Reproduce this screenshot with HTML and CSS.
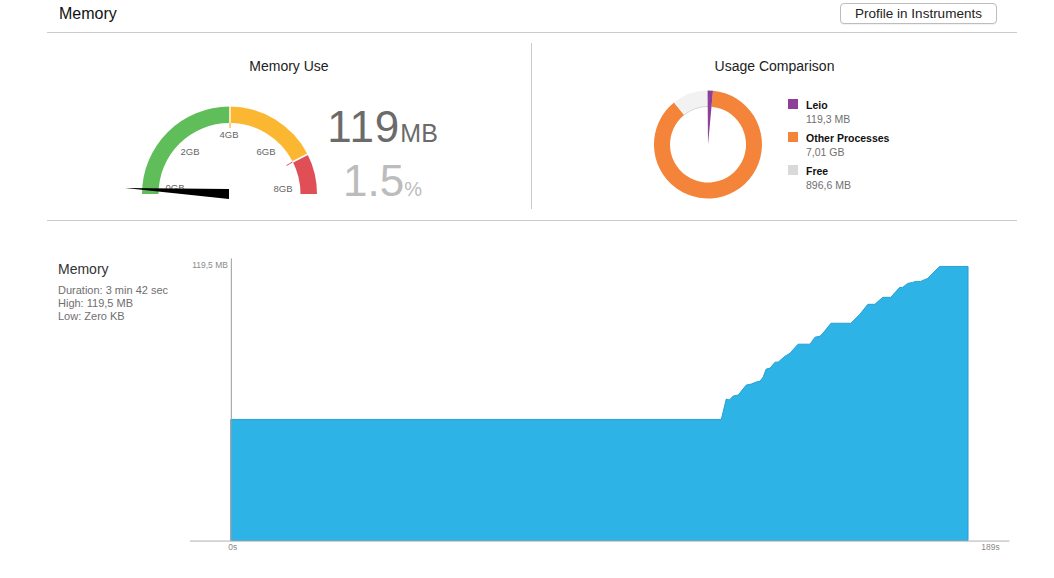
FILE: index.html
```html
<!DOCTYPE html>
<html lang="en">
<head>
  <meta charset="UTF-8" />
  <title>Memory</title>
  <link rel="stylesheet" href="styles.css">
</head>
<body>
  <div class="report">

    <!-- header -->
    <header class="report-head">
      <h1>Memory</h1>
      <button class="btn">Profile in Instruments</button>
    </header>

    <!-- gauges -->
    <section class="summary">
      <div class="panel">
        <h2>Memory Use</h2>
        <div class="gauge-row">
          <svg class="gauge" width="205" height="110" viewBox="120 95 205 110">
            <path d="M142 194 A87.5 87.5 0 0 1 229.5 106.5 L229.5 123 A71 71 0 0 0 158.5 194 Z" fill="#5fbe59"/>
            <path d="M229.5 106.5 A87.5 87.5 0 0 1 307.5 154.3 L292.8 161.8 A71 71 0 0 0 229.5 123 Z" fill="#fbb731"/>
            <path d="M307.5 154.3 A87.5 87.5 0 0 1 317 194 L300.5 194 A71 71 0 0 0 292.8 161.8 Z" fill="#e04f56"/>
            <line x1="230" y1="106" x2="230" y2="123" stroke="#fff" stroke-width="1.2"/>
            <line x1="230" y1="123" x2="230" y2="128" stroke="#f5a623" stroke-width="1"/>
            <line x1="308" y1="154" x2="292.5" y2="162" stroke="#fff" stroke-width="1.5"/>
            <line x1="292.5" y1="162" x2="286.5" y2="165.5" stroke="#e04f56" stroke-width="1"/>
            <g class="gauge-labels">
              <text x="175" y="188">0GB</text>
              <text x="190" y="152">2GB</text>
              <text x="229" y="135">4GB</text>
              <text x="266" y="152">6GB</text>
              <text x="283" y="189">8GB</text>
            </g>
            <polygon points="125,188 229,189 229,199" fill="#000"/>
          </svg>
          <div class="readout">
            <div class="readout-main">119<small>MB</small></div>
            <div class="readout-pct">1.5<small>%</small></div>
          </div>
        </div>
      </div>

      <div class="panel panel-right">
        <h2>Usage Comparison</h2>
        <div class="donut-row">
          <svg class="donut" width="120" height="120" viewBox="650 86 120 120">
            <path d="M714 90.73 A54 54 0 1 1 675 102.5 L685.1 114.97 A38 38 0 1 0 712.5 106.66 Z" fill="#f3843a"/>
            <path d="M675 102.5 A54 54 0 0 1 709 90.5 L709 106.5 A38 38 0 0 0 685.1 114.97 Z" fill="#f2f2f2"/>
            <path d="M709 106.5 A38 38 0 0 0 685.1 114.97" fill="none" stroke="#d6d6d6" stroke-width="1"/>
            <path d="M709 144.5 L708.6 90.5 A54 54 0 0 1 714 90.73 Z" fill="#8e3f97"/>
          </svg>
          <ul class="legend">
            <li><span class="swatch leio"></span><div><b>Leio</b><span>119,3 MB</span></div></li>
            <li><span class="swatch other"></span><div><b>Other Processes</b><span>7,01 GB</span></div></li>
            <li><span class="swatch free"></span><div><b>Free</b><span>896,6 MB</span></div></li>
          </ul>
        </div>
      </div>
    </section>

    <!-- timeline -->
    <section class="timeline">
      <div class="timeline-info">
        <h3>Memory</h3>
        <p>Duration: 3 min 42 sec</p>
        <p>High: 119,5 MB</p>
        <p>Low: Zero KB</p>
      </div>
      <svg class="chart" width="840" height="310" viewBox="180 250 840 310">
        <path d="M231 541 L231 419.5 L723 419.5 L728 399 L731 400 L735 396 L740 395 L748 385 L753 384 L758 382 L762 381 L765 377 L768 369 L772 368 L777 362 L780 362 L787 356 L792 353 L800 344 L812 344 L817 337 L822 336 L825 333 L833 323 L853 323 L862 314 L870 304 L877 304 L885 297 L893 297 L902 287 L905 287 L910 283 L915 282 L918 281 L923 281 L930 278 L942 266 L970.5 266 L970.5 541 Z" fill="#2db3e5" stroke="#2a9fd2" stroke-width="1"/>
        <line x1="231.5" y1="258" x2="231.5" y2="541" stroke="#9a9a9a"/>
        <line x1="190" y1="541.5" x2="1012" y2="541.5" stroke="#b0b0b0"/>
        <text class="axis" x="228" y="268" text-anchor="end">119,5 MB</text>
        <text class="axis" x="233" y="550" text-anchor="middle">0s</text>
        <text class="axis" x="993" y="550" text-anchor="middle">189s</text>
      </svg>
    </section>

  </div>
</body>
</html>
```

FILE: styles.css
```css
* { margin: 0; padding: 0; box-sizing: border-box; }

html, body {
  font-family: 'Liberation Sans', Arial, sans-serif;
  background: #fff;
  color: #222;
  width: 1054px;
  height: 578px;
  overflow: hidden;
}

.report {
  margin-left: 47px;
  width: 970px;
}

.report-head {
  height: 33px;
  border-bottom: 1px solid #cacaca;
  display: flex;
  align-items: flex-start;
  justify-content: space-between;
  padding: 0 20px 0 12px;
}

.report-head h1 {
  font-size: 16px;
  font-weight: normal;
  color: #111;
  line-height: 20px;
  margin-top: 4px;
}

.btn {
  margin-top: 3px;
  width: 157px;
  height: 21px;
  font-family: inherit;
  font-size: 13.5px;
  color: #222;
  background: #fff;
  border: 1px solid #bdbdbd;
  border-radius: 4px;
  box-shadow: 0 1px 0 rgba(0,0,0,0.05);
}

.summary {
  display: flex;
  padding: 10px 0 11px;
  border-bottom: 1px solid #cacaca;
}

.panel {
  width: 484px;
  height: 166px;
}

.panel-right {
  width: 486px;
  border-left: 1px solid #cacaca;
}

.panel h2 {
  font-size: 14px;
  font-weight: normal;
  line-height: 16px;
  text-align: center;
  margin-top: 15px;
  color: #222;
}

.gauge-row {
  display: flex;
  padding-left: 73px;
  margin-top: 21px;
}

.gauge { display: block; }

.gauge-labels text {
  font-size: 9.5px;
  fill: #666;
  text-anchor: middle;
  dominant-baseline: middle;
}

.readout {
  width: 115px;
  text-align: center;
  margin-top: 8px;
  font-size: 44px;
  line-height: 48px;
  white-space: nowrap;
}

.readout small { font-size: 25px; }

.readout-main {
  color: #6b6b6b;
  letter-spacing: 1px;
}

.readout-main small { letter-spacing: 0; }

.readout-pct { color: #bcbcbc; }

.readout-pct small { font-size: 20px; }

.donut-row {
  display: flex;
  padding-left: 117px;
  margin-top: 12px;
}

.donut { display: block; }

.legend {
  list-style: none;
  margin-left: 19px;
  padding-top: 12px;
}

.legend li {
  display: flex;
  height: 33px;
}

.swatch {
  width: 10px;
  height: 10px;
  margin: 1px 8px 0 0;
}

.swatch.leio { background: #8e3f97; }
.swatch.other { background: #f3843a; }
.swatch.free { background: #d9d9d9; }

.legend b,
.legend span {
  display: block;
  font-size: 10.5px;
  line-height: 14px;
}

.legend b { color: #111; }

.legend div span { color: #707070; }

.timeline {
  display: flex;
  padding-top: 29px;
}

.timeline-info {
  width: 133px;
  padding: 11px 0 0 11px;
}

.timeline-info h3 {
  font-size: 14px;
  font-weight: normal;
  line-height: 16px;
  color: #333;
  margin-bottom: 7px;
}

.timeline-info p {
  font-size: 11px;
  line-height: 13px;
  color: #6f6f6f;
}

.chart { display: block; }

.chart .axis {
  font-size: 8.5px;
  fill: #8a8a8a;
}
```
